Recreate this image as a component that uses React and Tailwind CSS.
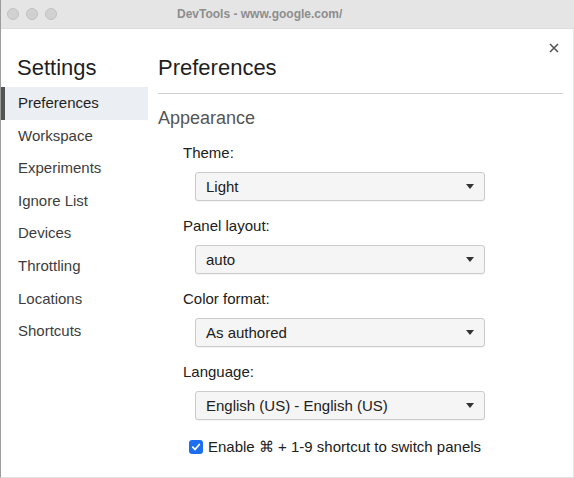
import React from 'react';

const NAV = ['Preferences', 'Workspace', 'Experiments', 'Ignore List', 'Devices', 'Throttling', 'Locations', 'Shortcuts'];

function Select({ value }) {
  return (
    <div className="mt-[9px] ml-[37px] w-[290px] h-[29px] flex items-center justify-between pl-[10px] pr-[10px] bg-[#f5f5f5] border border-[#cbcbcb] rounded-[3px] shadow-[0_1px_0_rgba(0,0,0,0.04)]">
      <span className="text-[15px] leading-[20px] text-[#202020]">{value}</span>
      <svg width="8" height="5" viewBox="0 0 8 5">
        <path d="M0 0h8L4 5z" fill="#333" />
      </svg>
    </div>
  );
}

function Field({ label, value, first }) {
  return (
    <div className={first ? 'mt-[14px]' : 'mt-[15px]'}>
      <div className="pl-[25px] text-[15px] leading-[20px] text-[#202020]">{label}</div>
      <Select value={value} />
    </div>
  );
}

export default function App() {
  return (
    <div
      className="w-[574px] h-[478px] flex flex-col bg-white border-l border-l-[#9c9c9c] border-r border-r-[#e6e6e6] border-b border-b-[#e2e2e2] overflow-hidden"
      style={{ fontFamily: '"Liberation Sans", Arial, sans-serif' }}
    >
      {/* title bar */}
      <div className="h-[29px] shrink-0 flex items-center bg-[#e5e5e5] border-b border-[#dcdcdc]">
        <div className="flex items-center gap-[7px] pl-[6px]">
          <span className="w-[12px] h-[12px] rounded-full bg-[#d1d1d1] border border-[#c2c2c2]" />
          <span className="w-[12px] h-[12px] rounded-full bg-[#d1d1d1] border border-[#c2c2c2]" />
          <span className="w-[12px] h-[12px] rounded-full bg-[#d1d1d1] border border-[#c2c2c2]" />
        </div>
        <div className="ml-[120px] text-[12px] font-bold text-[#8d8d8d]">DevTools - www.google.com/</div>
      </div>

      <div className="relative flex flex-1">
        <button className="absolute right-[14px] top-[14px] w-[10px] h-[10px]" aria-label="Close">
          <svg width="10" height="10" viewBox="0 0 10 10">
            <path d="M1 1l8 8M9 1l-8 8" stroke="#505050" strokeWidth="1.5" />
          </svg>
        </button>

        {/* sidebar */}
        <div className="w-[147px] shrink-0">
          <div className="pt-[26px] pb-[6px] pl-[16px] text-[22px] leading-[26px] text-[#1f1f1f]">Settings</div>
          {NAV.map((item, i) => (
            <div
              key={item}
              className={`h-[32.6px] flex items-center text-[15px] ${
                i === 0 ? 'bg-[#ebeef2] text-[#1f1f1f] border-l-[5px] border-[#545454] -ml-px pl-[13px]' : 'pl-[17px] text-[#3d3d3d]'
              }`}
            >
              {item}
            </div>
          ))}
        </div>

        {/* main */}
        <div className="flex-1 pl-[10px] pr-[10px]">
          <div className="pt-[26px] pb-[12px] text-[22px] leading-[26px] text-[#1f1f1f] border-b border-[#cfcfcf]">
            Preferences
          </div>
          <div className="mt-[13px] text-[18px] leading-[22px] text-[#555]">Appearance</div>
          <Field first label="Theme:" value="Light" />
          <Field label="Panel layout:" value="auto" />
          <Field label="Color format:" value="As authored" />
          <Field label="Language:" value="English (US) - English (US)" />
          <label className="mt-[17px] pl-[31px] flex items-center gap-[5px] text-[15px] leading-[20px] text-[#202020]">
            <span className="w-[14px] h-[14px] rounded-[3px] bg-[#1d6ff0] flex items-center justify-center">
              <svg width="10" height="10" viewBox="0 0 10 10">
                <path d="M1.8 5.2l2.2 2.3 4.3-5" stroke="white" strokeWidth="1.8" fill="none" strokeLinecap="round" strokeLinejoin="round" />
              </svg>
            </span>
            Enable ⌘ + 1-9 shortcut to switch panels
          </label>
        </div>
      </div>
    </div>
  );
}
